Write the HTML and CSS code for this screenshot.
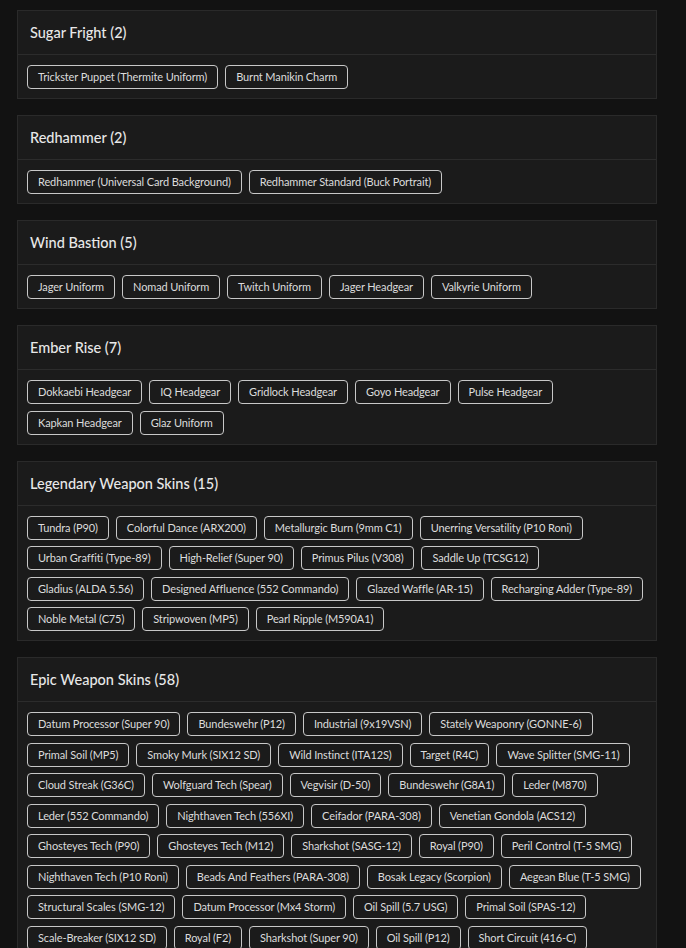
FILE: index.html
```html
<!DOCTYPE html>
<html lang="en">
<head>
    <meta charset="UTF-8" />
    <meta name="viewport" content="width=device-width, initial-scale=1.0" />
    <title>Bundle Contents</title>
    <link rel="stylesheet" href="styles.css">
</head>
<body>

    <div class="bundle-list">

        <div class="bundle-card">
            <div class="bundle-header">Sugar Fright (2)</div>
            <div class="bundle-items">
                <span class="item-chip">Trickster Puppet (Thermite Uniform)</span>
                <span class="item-chip">Burnt Manikin Charm</span>
            </div>
        </div>

        <div class="bundle-card">
            <div class="bundle-header">Redhammer (2)</div>
            <div class="bundle-items">
                <span class="item-chip">Redhammer (Universal Card Background)</span>
                <span class="item-chip">Redhammer Standard (Buck Portrait)</span>
            </div>
        </div>

        <div class="bundle-card">
            <div class="bundle-header">Wind Bastion (5)</div>
            <div class="bundle-items">
                <span class="item-chip">Jager Uniform</span>
                <span class="item-chip">Nomad Uniform</span>
                <span class="item-chip">Twitch Uniform</span>
                <span class="item-chip">Jager Headgear</span>
                <span class="item-chip">Valkyrie Uniform</span>
            </div>
        </div>

        <div class="bundle-card">
            <div class="bundle-header">Ember Rise (7)</div>
            <div class="bundle-items">
                <span class="item-chip">Dokkaebi Headgear</span>
                <span class="item-chip">IQ Headgear</span>
                <span class="item-chip">Gridlock Headgear</span>
                <span class="item-chip">Goyo Headgear</span>
                <span class="item-chip">Pulse Headgear</span>
                <span class="item-chip">Kapkan Headgear</span>
                <span class="item-chip">Glaz Uniform</span>
            </div>
        </div>

        <div class="bundle-card">
            <div class="bundle-header">Legendary Weapon Skins (15)</div>
            <div class="bundle-items">
                <span class="item-chip">Tundra (P90)</span>
                <span class="item-chip">Colorful Dance (ARX200)</span>
                <span class="item-chip">Metallurgic Burn (9mm C1)</span>
                <span class="item-chip">Unerring Versatility (P10 Roni)</span>
                <span class="item-chip">Urban Graffiti (Type-89)</span>
                <span class="item-chip">High-Relief (Super 90)</span>
                <span class="item-chip">Primus Pilus (V308)</span>
                <span class="item-chip">Saddle Up (TCSG12)</span>
                <span class="item-chip">Gladius (ALDA 5.56)</span>
                <span class="item-chip">Designed Affluence (552 Commando)</span>
                <span class="item-chip">Glazed Waffle (AR-15)</span>
                <span class="item-chip">Recharging Adder (Type-89)</span>
                <span class="item-chip">Noble Metal (C75)</span>
                <span class="item-chip">Stripwoven (MP5)</span>
                <span class="item-chip">Pearl Ripple (M590A1)</span>
            </div>
        </div>

        <div class="bundle-card">
            <div class="bundle-header">Epic Weapon Skins (58)</div>
            <div class="bundle-items">
                <span class="item-chip">Datum Processor (Super 90)</span>
                <span class="item-chip">Bundeswehr (P12)</span>
                <span class="item-chip">Industrial (9x19VSN)</span>
                <span class="item-chip">Stately Weaponry (GONNE-6)</span>
                <span class="item-chip">Primal Soil (MP5)</span>
                <span class="item-chip">Smoky Murk (SIX12 SD)</span>
                <span class="item-chip">Wild Instinct (ITA12S)</span>
                <span class="item-chip">Target (R4C)</span>
                <span class="item-chip">Wave Splitter (SMG-11)</span>
                <span class="item-chip">Cloud Streak (G36C)</span>
                <span class="item-chip">Wolfguard Tech (Spear)</span>
                <span class="item-chip">Vegvisir (D-50)</span>
                <span class="item-chip">Bundeswehr (G8A1)</span>
                <span class="item-chip">Leder (M870)</span>
                <span class="item-chip">Leder (552 Commando)</span>
                <span class="item-chip">Nighthaven Tech (556XI)</span>
                <span class="item-chip">Ceifador (PARA-308)</span>
                <span class="item-chip">Venetian Gondola (ACS12)</span>
                <span class="item-chip">Ghosteyes Tech (P90)</span>
                <span class="item-chip">Ghosteyes Tech (M12)</span>
                <span class="item-chip">Sharkshot (SASG-12)</span>
                <span class="item-chip">Royal (P90)</span>
                <span class="item-chip">Peril Control (T-5 SMG)</span>
                <span class="item-chip">Nighthaven Tech (P10 Roni)</span>
                <span class="item-chip">Beads And Feathers (PARA-308)</span>
                <span class="item-chip">Bosak Legacy (Scorpion)</span>
                <span class="item-chip">Aegean Blue (T-5 SMG)</span>
                <span class="item-chip">Structural Scales (SMG-12)</span>
                <span class="item-chip">Datum Processor (Mx4 Storm)</span>
                <span class="item-chip">Oil Spill (5.7 USG)</span>
                <span class="item-chip">Primal Soil (SPAS-12)</span>
                <span class="item-chip">Scale-Breaker (SIX12 SD)</span>
                <span class="item-chip">Royal (F2)</span>
                <span class="item-chip">Sharkshot (Super 90)</span>
                <span class="item-chip">Oil Spill (P12)</span>
                <span class="item-chip">Short Circuit (416-C)</span>
            </div>
        </div>

    </div>

</body>
</html>
```

FILE: styles.css
```css
* {
    box-sizing: border-box;
}

body {
    margin: 0;
    background-color: #121212;
    font-family: Lato, "Open Sans", Arial, sans-serif;
    color: #e6e6e6;
}

.bundle-list {
    width: 640px;
    margin: 10px 0 0 17px;
}

.bundle-card {
    background-color: #1b1b1b;
    border: 1px solid #2a2a2a;
    margin-bottom: 16px;
}

.bundle-header {
    height: 44px;
    padding: 0 12px;
    display: flex;
    align-items: center;
    font-size: 14.5px;
    font-weight: 500;
    color: #e8e8e8;
    border-bottom: 1px solid #2c2c2c;
}

.bundle-items {
    display: flex;
    flex-wrap: wrap;
    gap: 6.5px 7px;
    padding: 10px 9px 9px;
}

.item-chip {
    height: 24px;
    line-height: 22px;
    padding: 0 10px;
    border: 1px solid #c8c8c8;
    border-radius: 4px;
    font-size: 11px;
    letter-spacing: -0.12px;
    color: #dcdcdc;
    white-space: nowrap;
}
```
